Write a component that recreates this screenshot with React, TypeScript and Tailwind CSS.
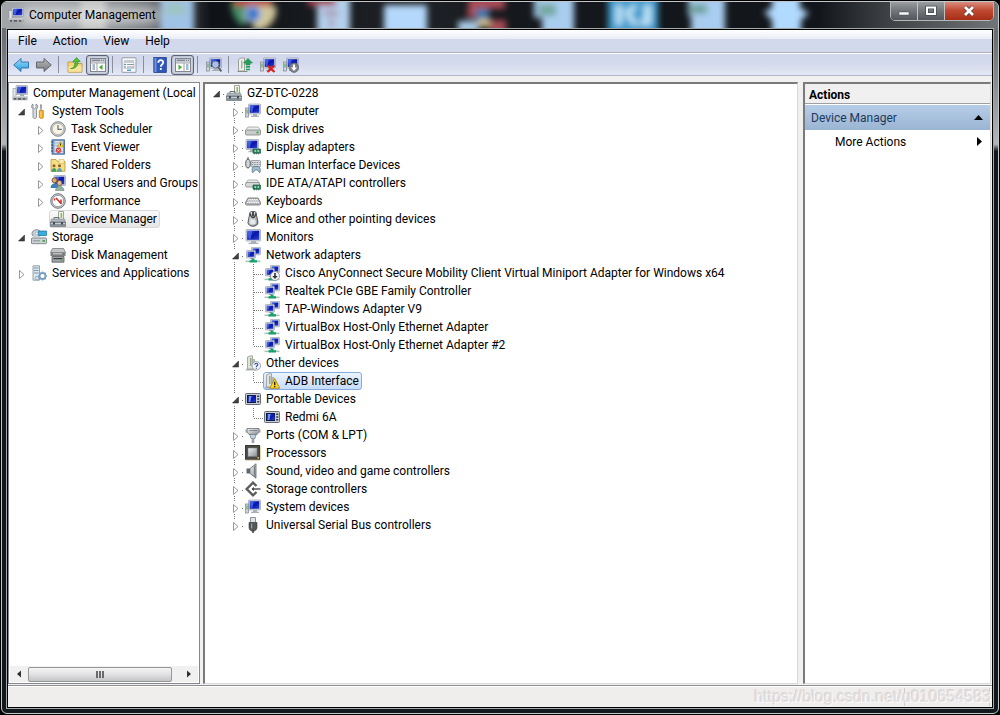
import type { ReactNode } from "react";
import clsx from "clsx";

type TreeNode = {
  label: string;
  icon: string;
  selected?: "active" | "inactive";
  children?: TreeNode[];
  closed?: boolean;
};

/* ---------- icon parts ---------- */

function Screen({ x, y, w, h }: { x: number; y: number; w: number; h: number }) {
  return (
    <g>
      <rect x={x} y={y} width={w} height={h} rx="0.6" fill="#d5dbe4" stroke="#8d96a5" strokeWidth="0.6" />
      <rect x={x + 1.2} y={y + 1.2} width={w - 2.4} height={h - 2.4} fill="url(#screen)" />
      <path d={`M${x + 1.4} ${y + 1.4}h${(w - 2.8) / 2.4}l-${w / 8} ${h - 2.8}h-${w / 8}z`} fill="#4d6cf0" opacity="0.75" />
    </g>
  );
}

const bigMonitor = (
  <g>
    <Screen x={1} y={0.5} w={14.5} h={11.5} />
    <path d="M6 12h5v1.8h2.5V15h-10v-1.2H6z" fill="#a9b0b9" />
  </g>
);

const computer = (
  <g>
    <Screen x={3.5} y={1} w={12} h={10} />
    <path d="M8 11h4v1.8h2V14H6v-1.2h2z" fill="#a9b0b9" />
    <rect x="0.5" y="5" width="3" height="9" fill="#cfd6da" stroke="#7e878d" strokeWidth="0.7" />
    <path d="M1.5 6.5h1v4h-1z" fill="#45a64a" />
  </g>
);

const mgmt = (
  <g>
    <Screen x={4} y={0.5} w={11.5} h={9} />
    <path d="M1 3.5h3v8H1z" fill="#e4e8ec" stroke="#858e98" strokeWidth="0.6" />
    <path d="M8 9.5h4v2H8z" fill="#a4abb4" />
    <path d="M0.5 11.5h15v3.8h-15z" fill="#a0a5aa" />
    <path d="M0.5 11.2h15v1.2h-15z" fill="#d3d7da" />
    <path d="M2 13.2h2v1.2H2zm4 0h3v1.2H6zm5 0h2v1.2h-2z" fill="#43474b" />
  </g>
);

const network = (
  <g>
    <Screen x={6.5} y={0.3} w={9} h={7.5} />
    <Screen x={1.5} y={3.5} w={9} h={7.5} />
    <path d="M5 11h3v1H5z" fill="#9aa1a9" />
    <path d="M0.5 13.6h15v1.5h-15z" fill="#a3c4b4" />
    <path d="M6.5 11.5h3v1.7h2.5v2.4H4.5v-2.4h2z" fill="#16a06c" />
  </g>
);

const toolbox = (
  <g>
    <path d="M8.5 0.5h5v8h-5z" fill="#f3f5ee" stroke="#8a8f88" strokeWidth="0.8" />
    <path d="M10.5 2h1.6v5h-1.6z" fill="#8cba5d" />
    <path d="M4 8V6.500h5V8" fill="none" stroke="#6b7378" />
    <path d="M1.5 8h13l1 3.5h-15z" fill="#aeb7bc" stroke="#737b80" strokeWidth="0.5" />
    <path d="M0.5 11h15v4.5h-15z" fill="#87929a" stroke="#5f686e" strokeWidth="0.6" />
    <path d="M1 12h14v1H1z" fill="#c5cdd2" />
    <path d="M3 11h2v2.5H3zm8 0h2v2.5h-2z" fill="#454c51" />
  </g>
);

const tower = (
  <g>
    <path d="M2.5 2 5 0.8h2.5V14H2.5z" fill="#dfe3dd" stroke="#8a8e88" strokeWidth="0.7" />
    <path d="M5 3h1.5v8H5z" fill="#96ab82" />
    <path d="M0.8 14.2h10V15.4h-10z" fill="#9a9f9a" />
    <path d="M8 4h2v10H8z" fill="#b3b8b3" />
  </g>
);

const drive = (
  <g>
    <path d="M3 6h10l2.5 3.5h-15z" fill="#eceeee" stroke="#909494" strokeWidth="0.7" />
    <rect x="0.5" y="9" width="15" height="5" rx="1" fill="#c9cccb" stroke="#7f8383" strokeWidth="0.8" />
    <path d="M11.5 10.5h2v2h-2z" fill="#3ba845" />
  </g>
);

const card = (
  <g>
    <path d="M8 10h7.5v4.2H8z" fill="#23855a" stroke="#155a3d" strokeWidth="0.7" />
    <path d="M9.5 11.2h1.6v1.6H9.5zm3 0h1.6v1.6h-1.6z" fill="#d3e7cd" />
    <path d="M9 14.8h1m1 0h1m1 0h1" stroke="#3b6653" />
  </g>
);

const portable = (
  <g>
    <rect x="0.5" y="2.5" width="15" height="11" rx="1" fill="#c9cdd4" stroke="#656b77" />
    <rect x="2" y="4" width="9" height="8" fill="#101a44" />
    <rect x="3.500" y="5" width="7" height="6" fill="url(#screen)" />
    <path d="M4 5h2.500L5.400 11H3.500z" fill="#6f93ff" />
    <path d="M12.200 4.500h2v1.500h-2zm0 2.800h2v1.500h-2zm0 2.800h2v1.500h-2z" fill="#30343d" />
  </g>
);

const downBadge = (
  <g>
    <circle cx="11" cy="11" r="4.5" fill="#f3f3f3" stroke="#84888c" strokeWidth="0.8" />
    <path d="M10.2 8h1.6v3h1.900L11 14l-2.700-3h1.900z" fill="#2f3337" />
  </g>
);

const icons: Record<string, ReactNode> = {
  mgmt,
  computer,
  network,
  toolbox,
  drive,
  portable,
  monitor: bigMonitor,
  tools: (
    <g>
      <path d="M2 1v3.500l1.500 1.300L5 4.500V1c2 .8 2.300 3.500.5 5v8c0 2-3.500 2-3.500 0V6C0 4.500.3 1.800 2 1z" fill="#d9dcdf" stroke="#777d83" strokeWidth="0.8" />
      <path d="M9 1.500h2L10.600 7H9.400z" fill="#8c9298" />
      <path d="M8.300 7.500h4v7c-1 1.300-3 1.300-4 0z" fill="#f0ae1d" stroke="#b97c0a" strokeWidth="0.7" />
      <path d="M9.500 8.500h.9v6h-.9z" fill="#ffe08a" />
    </g>
  ),
  clock: (
    <g>
      <circle cx="8" cy="8" r="7.300" fill="#c6cace" stroke="#7d8286" strokeWidth="0.9" />
      <circle cx="8" cy="8" r="5.600" fill="#fbf4dc" stroke="#92979b" strokeWidth="0.5" />
      <path d="M8 4v4.300h3.700" fill="none" stroke="#5b6f9a" strokeWidth="1.200" />
    </g>
  ),
  events: (
    <g>
      <rect x="2" y="0.800" width="12.500" height="14.400" fill="#7e9dc8" stroke="#3e5d93" strokeWidth="0.8" />
      <path d="M4.500 2h8.500v12H4.500z" fill="#d6e3f4" />
      <path d="M5 4h8M5 6.500h8M5 12.500h8" stroke="#8ca6cc" strokeWidth="0.7" />
      <path d="M1 3h2m-2 3h2M1 9h2m-2 3h2" stroke="#33445f" />
      <path d="m10.500 2.500 3.300 5.500H7.200z" fill="#fbd133" stroke="#a8810c" strokeWidth="0.5" />
      <path d="M10.500 4.500v2" stroke="#3d3000" />
      <circle cx="8.500" cy="11.300" r="2.700" fill="#da4038" />
      <path d="m7.400 10.200 2.200 2.200m0-2.200-2.200 2.200" stroke="#fff" strokeWidth="0.8" />
    </g>
  ),
  shared: (
    <g>
      <path d="M1 2.500h5l1.500 1.800H15v10H1z" fill="#f4dd84" stroke="#bb9634" strokeWidth="0.8" />
      <path d="M9 2.500h5v4H9z" fill="#faedb5" stroke="#c8a84f" strokeWidth="0.5" />
      <circle cx="4" cy="8.800" r="1.500" fill="#8a5b2c" />
      <path d="M1.500 14.800c0-5 5-5 5 0z" fill="#4a9d62" />
      <circle cx="9.500" cy="8.800" r="1.500" fill="#8a5b2c" />
      <path d="M7 14.800c0-5 5-5 5 0z" fill="#5aa5ad" />
    </g>
  ),
  users: (
    <g>
      <Screen x={4} y={0.5} w={11.5} h={10} />
      <circle cx="4.500" cy="5.300" r="2.500" fill="#dca872" stroke="#6d4520" strokeWidth="0.8" />
      <path d="M0.500 13c0-6 8-6 8 0z" fill="#3c7fba" />
      <circle cx="9.500" cy="8" r="2.500" fill="#e8c08c" stroke="#704a24" strokeWidth="0.8" />
      <path d="M5.500 15.800c0-6 8.500-6 8.500 0z" fill="#91b0a0" stroke="#56796a" strokeWidth="0.5" />
    </g>
  ),
  perf: (
    <g>
      <circle cx="8" cy="8" r="7.300" fill="#cfd2d5" stroke="#666b6f" strokeWidth="0.9" />
      <circle cx="8" cy="8" r="5.700" fill="#fff" stroke="#777c80" strokeWidth="0.7" />
      <path d="M4.500 5.500v2M6 5l5 5.500M11 6.500V11" fill="none" stroke="#d8281f" strokeWidth="1.500" />
    </g>
  ),
  storage: (
    <g>
      <ellipse cx="5.500" cy="4.500" rx="4.500" ry="3.800" fill="#c9d1d8" stroke="#707980" strokeWidth="0.8" />
      <circle cx="5.500" cy="4.500" r="1.300" fill="#fff" stroke="#7f888f" strokeWidth="0.5" />
      <path d="M7.500 2h8v4.500h-8z" fill="#36aee4" stroke="#1a6e9c" strokeWidth="0.7" />
      <path d="M1 7.500h13.500l1 2H0.500z" fill="#eceeee" />
      <rect x="0.500" y="9" width="15" height="5.700" rx="0.700" fill="#cdd2d4" stroke="#70777b" strokeWidth="0.8" />
      <path d="M11.500 11h2.500v1.800h-2.500z" fill="#3cad46" />
      <path d="M2 11.800h7" stroke="#8b9296" />
    </g>
  ),
  disk: (
    <g>
      <path d="M2.500 1.500h11l2 4H0.500z" fill="#c4c6c7" stroke="#6f7375" strokeWidth="0.7" />
      <path d="M0.500 5.500h15v3.500h-15z" fill="#7c8082" />
      <path d="M3 6.800h9" stroke="#d9dcdd" />
      <path d="M2 9.500h12v5.700H2z" fill="#a0a4a6" stroke="#575b5d" strokeWidth="0.8" />
      <path d="M3.500 11h9v1.200h-9z" fill="#383b3d" />
      <path d="M10.500 13h2v1h-2z" fill="#4fb84f" />
    </g>
  ),
  services: (
    <g>
      <path d="M2 0.800h6.500v14.400H2z" fill="#dfe7ee" stroke="#808d98" strokeWidth="0.8" />
      <path d="M3 3h4.500M3 5.500h4.500M3 8h4.500" stroke="#7d97ad" />
      <circle cx="11.500" cy="11" r="3" fill="none" stroke="#7aa0c2" strokeWidth="1.800" />
      <path d="M11.500 6.500v2m0 5v2m-4.500-4.500h2m5 0h2m-7.700-3.200 1.400 1.400m3.600 3.600 1.400 1.400m0-6.400-1.400 1.400m-3.600 3.600-1.400 1.400" stroke="#7aa0c2" strokeWidth="1.300" />
      <circle cx="6" cy="13.200" r="1.800" fill="none" stroke="#93a9bb" />
    </g>
  ),
  display: (
    <g>
      <Screen x={1} y={0.5} w={12.5} h={10} />
      <path d="M5 10.500h3.500V12H10v1.200H3.500V12H5z" fill="#a9b0b9" />
      {card}
    </g>
  ),
  hid: (
    <g>
      <rect x="6" y="3.500" width="9.500" height="6.500" rx="1" fill="#d9dcdf" stroke="#7e8489" strokeWidth="0.7" />
      <path d="M7 5.500h7.500M7 7.500h7.500" stroke="#82888d" strokeDasharray="1 0.700" />
      <path d="M3 0v2m0 0c3 0 3.200 9 0 9s-3-9 0-9z" fill="#d3d6d9" stroke="#44494d" strokeWidth="0.9" />
      <path d="M7.500 15.500c-1-3 0-6 1.500-6h4c1.500 0 3 3 2 6-1 .5-1.800-2-2.500-2.500h-2.500c-.7.500-1.500 3-2.500 2.500z" fill="#9dbfd4" stroke="#4c6473" strokeWidth="0.7" />
    </g>
  ),
  ide: (
    <g>
      <path d="M3 5h9l2.500 3H1z" fill="#eceeee" stroke="#909494" strokeWidth="0.7" />
      <rect x="0.500" y="7.500" width="14" height="4.500" rx="1.500" fill="#d7dad9" stroke="#868a8a" strokeWidth="0.8" />
      {card}
    </g>
  ),
  keyboard: (
    <g>
      <path d="M3 5h10l2.500 4.500v1.800l-1 .7h-13l-1-.7V9.500z" fill="#b1b5b8" stroke="#6b7074" strokeWidth="0.8" />
      <path d="M3.500 6.500h9.500M2.700 8h11M2 9.500h12.300" stroke="#fff" strokeDasharray="1.200 0.600" />
    </g>
  ),
  mouse: (
    <g>
      <path d="M5 1.500c0-1.500 6-1.500 6 0l2 10c0 5-10 5-10 0z" fill="url(#metal)" stroke="#44484b" strokeWidth="0.9" />
      <path d="M5 2.500c1 3.500 1.500 4 3 4s2-.5 3-4" fill="none" stroke="#3e4245" strokeWidth="1.300" />
      <path d="M7.200 1h1.600v4H7.200z" fill="#26292b" />
      <path d="M6 8c1 1 3 1 4 0l1 4c-1 2-5 2-6 0z" fill="#fff" opacity="0.700" />
    </g>
  ),
  netdisabled: (
    <g>
      {network}
      {downBadge}
    </g>
  ),
  other: (
    <g>
      {tower}
      <circle cx="11.300" cy="10.800" r="4.300" fill="#f1f4fa" stroke="#8a95ab" strokeWidth="0.8" />
      <path d="M9.800 9.800c0-2.200 3.200-2 3 0-.1 1-1.500 1-1.500 2.200m0 .8v1" fill="none" stroke="#324e9b" strokeWidth="1.100" />
    </g>
  ),
  adb: (
    <g>
      {tower}
      <path d="m10.700 5.500 5 9.800h-10z" fill="#fdd52b" stroke="#a57c0d" strokeWidth="0.8" strokeLinejoin="round" />
      <path d="M10.700 8.800v3.400m0 .9v1.200" stroke="#2d2400" strokeWidth="1.400" />
    </g>
  ),
  ports: (
    <g>
      <path d="M2 1.500h12v3.500l-2 2.500H4L2 5z" fill="url(#metal)" stroke="#6a7076" strokeWidth="0.8" />
      <path d="M0.500 2.500h2v3h-2zm13 0h2v3h-2z" fill="#9ba1a6" />
      <path d="M5 7.500h6l-1 4H6z" fill="#c3d2dd" stroke="#707980" strokeWidth="0.7" />
      <path d="M6.700 11.500h2.600V16H6.700z" fill="#9aa1a7" />
      <path d="M4.500 3.500h7" stroke="#40464a" strokeDasharray="1 1" />
    </g>
  ),
  cpu: (
    <g>
      <path d="M1.500 15.300h14M15.300 1.500v13" stroke="#c29d4a" strokeWidth="1" strokeDasharray="1 1" />
      <rect x="0.500" y="0.500" width="14" height="13.700" fill="#4a4a47" stroke="#3a3a37" />
      <rect x="3" y="3" width="9" height="8.500" fill="url(#metal)" stroke="#787878" strokeWidth="0.5" />
      <path d="M12.500 12h1.500v1.500h-1.500z" fill="#efc853" />
    </g>
  ),
  speaker: (
    <g>
      <path d="M1.500 5.500h3.500v5H1.500z" fill="#5d686f" />
      <path d="M5 5.500 11 0.800v14.400L5 10.500z" fill="url(#metal)" stroke="#5f686e" strokeWidth="0.8" />
      <path d="M9.500 2.500v11" stroke="#798187" />
    </g>
  ),
  storagectl: (
    <g>
      <path d="M11.500 5 8 1.700 1.700 8 8 14.300l3.500-3.300" fill="none" stroke="#5c5c5c" strokeWidth="2.400" />
      <path d="M15.500 8H7" stroke="#7f7f7f" strokeWidth="2" />
      <path d="M6.500 8l2.500-2.300v4.600z" fill="#4a4a4a" />
    </g>
  ),
  usb: (
    <g>
      <path d="M5.500 0.500h5V6h-5z" fill="#dfe2e4" stroke="#767b7f" strokeWidth="0.8" />
      <path d="M4 5.500h8v5c0 2.500-2 3-2.500 3.500h-3C6 13.500 4 13 4 10.500z" fill="#54585b" stroke="#36393b" strokeWidth="0.6" />
      <path d="M6 6.500h1.200v5H6z" fill="#989da1" />
      <path d="M7.200 14h1.600v2H7.200z" fill="#45494c" />
    </g>
  ),
  /* toolbar */
  back: <path d="M0.700 8 8 1.500V5h7.500v6H8v3.500z" fill="url(#back)" stroke="#2a6fa8" strokeWidth="0.9" />,
  forward: <path d="M15.300 8 8 1.500V5H0.500v6H8v3.500z" fill="url(#fwd)" stroke="#5c5f62" strokeWidth="0.9" />,
  folderup: (
    <g>
      <path d="M1 5h5l1.500 1.500H15v8.700H1z" fill="#f3d477" stroke="#b98f2f" strokeWidth="0.8" />
      <path d="M1.500 9h13v5.700h-13z" fill="#f9e39b" />
      <path d="M3.500 11.500C7.500 11 8 8 8 4.500H5.800L9.600 0.500l3.700 4H11c0 4-2 7.500-7.500 7z" fill="#52c337" stroke="#2b8a1b" strokeWidth="0.6" />
    </g>
  ),
  showtree: (
    <g>
      <rect x="0.500" y="1.500" width="15" height="13" fill="#fff" stroke="#80858f" />
      <path d="M1 2h14v3.500H1z" fill="#c5cad3" />
      <path d="M2 3.300h8M11 3.300h1m1 0h1" stroke="#6f7582" />
      <path d="M1 6h14" stroke="#80858f" strokeWidth="0.7" />
      <path d="M2.500 8h2.500m-2.500 2h2.500m-2.500 2h2.500" stroke="#4a73ad" />
      <path d="M7 6v8.500" stroke="#9a9ea6" />
      <path d="M12.500 7.500v5.500L9 10.200z" fill="#3fae2a" />
    </g>
  ),
  showpane: (
    <g>
      <rect x="0.500" y="1.500" width="15" height="13" fill="#fff" stroke="#80858f" />
      <path d="M1 2h14v3.500H1z" fill="#c5cad3" />
      <path d="M2 3.300h8M11 3.300h1m1 0h1" stroke="#6f7582" />
      <path d="M1 6h14" stroke="#80858f" strokeWidth="0.7" />
      <path d="M11 8h2.500M11 10h2.500M11 12h2.500" stroke="#4a73ad" />
      <path d="M9 6v8.500" stroke="#9a9ea6" />
      <path d="M3.500 7.500v5.500L7 10.200z" fill="#3fae2a" />
    </g>
  ),
  properties: (
    <g>
      <rect x="1" y="0.800" width="14" height="14.500" rx="0.500" fill="#fafbfc" stroke="#8c929b" strokeWidth="0.9" />
      <path d="M3 3h10v2H3z" fill="#c5cbd4" />
      <path d="M3 7.500h2m-2 2.500h2" stroke="#4a90c8" />
      <path d="M6 7.500h7M6 10h7" stroke="#8c96a3" />
      <path d="M6 12.500h4v1.500H6z" fill="#4aa7d8" />
      <path d="M3 5.500h10v6H3z" fill="none" stroke="#a6adb8" strokeWidth="0.6" />
    </g>
  ),
  help: (
    <g>
      <rect x="1.800" y="0.500" width="12.500" height="15" fill="#2d57b8" stroke="#1b3680" strokeWidth="0.7" />
      <path d="M2.500 1h2v14h-2z" fill="#6f93de" />
      <path d="M6.300 5.800c0-3.500 5-3.300 4.900-.3-.1 2-2.400 2-2.400 4.200m0 1.300v2" fill="none" stroke="#fff" strokeWidth="1.800" />
    </g>
  ),
  scan: (
    <g>
      {computer}
      <circle cx="9.500" cy="7.500" r="3.500" fill="#cfe5f7" fillOpacity="0.800" stroke="#65727f" />
      <path d="m12 10 3.500 4.500" stroke="#56616c" strokeWidth="2" />
    </g>
  ),
  update: (
    <g>
      <path d="M1.500 2.500 4 1h3.500v13H1.500z" fill="#eef0ec" stroke="#8a8e88" strokeWidth="0.8" />
      <path d="M4 3.500h1.500v8H4z" fill="#a3b296" />
      <path d="M0.500 14.500h10" stroke="#8a8e88" strokeWidth="1.200" />
      <path d="M11 1.500 15.500 6H13v2H9V6H6.500z" fill="#1fa455" stroke="#0d7538" strokeWidth="0.5" />
      <path d="M9 9h4v1.700H9zm0 2.700h4v1.500H9z" fill="#1fa455" />
    </g>
  ),
  uninstall: (
    <g>
      {computer}
      <path d="m7.500 8.500 7 6.500m0-6.500-7 6.500" stroke="#dd1d1a" strokeWidth="2.200" />
    </g>
  ),
  disable: (
    <g>
      {computer}
      <circle cx="11" cy="10.700" r="4.700" fill="#7e8286" stroke="#5d6165" strokeWidth="0.700" />
      <path d="M10 7.500h2v3h2L11 14l-3-3.500h2z" fill="#fff" />
    </g>
  ),
};

function Icon({ name }: { name: string }) {
  return (
    <svg viewBox="0 0 16 16" className="size-4 shrink-0" aria-hidden="true">
      {icons[name]}
    </svg>
  );
}

function IconDefs() {
  return (
    <svg className="absolute size-0" aria-hidden="true">
      <defs>
        <linearGradient id="screen" x1="0" y1="0" x2="1" y2="1">
          <stop offset="0" stopColor="#2f4fe0" />
          <stop offset="0.5" stopColor="#0a16a8" />
          <stop offset="1" stopColor="#2a44d0" />
        </linearGradient>
        <linearGradient id="metal" x1="0" y1="0" x2="1" y2="1">
          <stop offset="0" stopColor="#f4f5f6" />
          <stop offset="1" stopColor="#868c91" />
        </linearGradient>
        <linearGradient id="back" x1="0" y1="0" x2="0" y2="1">
          <stop offset="0" stopColor="#a5dcf8" />
          <stop offset="1" stopColor="#1f9be0" />
        </linearGradient>
        <linearGradient id="fwd" x1="0" y1="0" x2="0" y2="1">
          <stop offset="0" stopColor="#b9bbbd" />
          <stop offset="1" stopColor="#77797b" />
        </linearGradient>
      </defs>
    </svg>
  );
}

/* ---------- tree ---------- */

const consoleTree: TreeNode = {
  label: "Computer Management (Local",
  icon: "mgmt",
  children: [
    {
      label: "System Tools",
      icon: "tools",
      children: [
        { label: "Task Scheduler", icon: "clock", closed: true },
        { label: "Event Viewer", icon: "events", closed: true },
        { label: "Shared Folders", icon: "shared", closed: true },
        { label: "Local Users and Groups", icon: "users", closed: true },
        { label: "Performance", icon: "perf", closed: true },
        { label: "Device Manager", icon: "toolbox", selected: "inactive" },
      ],
    },
    { label: "Storage", icon: "storage", children: [{ label: "Disk Management", icon: "disk" }] },
    { label: "Services and Applications", icon: "services", closed: true },
  ],
};

const deviceTree: TreeNode = {
  label: "GZ-DTC-0228",
  icon: "toolbox",
  children: [
    { label: "Computer", icon: "computer", closed: true },
    { label: "Disk drives", icon: "drive", closed: true },
    { label: "Display adapters", icon: "display", closed: true },
    { label: "Human Interface Devices", icon: "hid", closed: true },
    { label: "IDE ATA/ATAPI controllers", icon: "ide", closed: true },
    { label: "Keyboards", icon: "keyboard", closed: true },
    { label: "Mice and other pointing devices", icon: "mouse", closed: true },
    { label: "Monitors", icon: "monitor", closed: true },
    {
      label: "Network adapters",
      icon: "network",
      children: [
        { label: "Cisco AnyConnect Secure Mobility Client Virtual Miniport Adapter for Windows x64", icon: "netdisabled" },
        { label: "Realtek PCIe GBE Family Controller", icon: "network" },
        { label: "TAP-Windows Adapter V9", icon: "network" },
        { label: "VirtualBox Host-Only Ethernet Adapter", icon: "network" },
        { label: "VirtualBox Host-Only Ethernet Adapter #2", icon: "network" },
      ],
    },
    {
      label: "Other devices",
      icon: "other",
      children: [{ label: "ADB Interface", icon: "adb", selected: "active" }],
    },
    { label: "Portable Devices", icon: "portable", children: [{ label: "Redmi 6A", icon: "portable" }] },
    { label: "Ports (COM & LPT)", icon: "ports", closed: true },
    { label: "Processors", icon: "cpu", closed: true },
    { label: "Sound, video and game controllers", icon: "speaker", closed: true },
    { label: "Storage controllers", icon: "storagectl", closed: true },
    { label: "System devices", icon: "computer", closed: true },
    { label: "Universal Serial Bus controllers", icon: "usb", closed: true },
  ],
};

// One 19px indent step: dotted guide lines plus the expander arrow, if any.
function Cell({ lines, glyph, last, through, root }: { lines?: boolean; glyph?: "open" | "closed"; last?: boolean; through?: boolean; root?: boolean }) {
  return (
    <svg viewBox="0 0 19 18" className="h-[18px] w-[19px] shrink-0" aria-hidden="true">
      {lines && (
        <g stroke="#7b7b7b" strokeDasharray="1 1" fill="none">
          {through && <path d="M9.500 0v18" />}
          {!through && !root && <path d={glyph ? "M9.500 0v3" : "M9.500 0v10"} />}
          {!through && !root && !last && <path d={glyph ? "M9.500 16v2" : "M9.500 10v8"} />}
          {!through && <path d={glyph ? "M17 10.500h2" : "M10 10.500h9"} />}
        </g>
      )}
      {glyph === "open" && <path d="M13.500 7v6H7.500z" fill="#404040" stroke="#1f1f1f" strokeWidth="0.500" />}
      {glyph === "closed" && <path d="M8.500 6.500v8l4.500-4z" fill="#fff" stroke="#999" />}
    </svg>
  );
}

function Branch({ node, depth, trail, last, lines }: { node: TreeNode; depth: number; trail: boolean[]; last: boolean; lines: boolean }) {
  const glyph = node.closed ? "closed" : node.children ? "open" : undefined;
  return (
    <li role="treeitem" aria-expanded={glyph ? glyph === "open" : undefined} aria-selected={!!node.selected}>
      <div className="flex h-[18px] items-center whitespace-nowrap">
        {trail.map((more, i) => (
          <Cell key={i} lines={lines && more} through />
        ))}
        {(depth > 0 || lines) && <Cell lines={lines} glyph={glyph} last={last} root={depth === 0} />}
        <span
          className={clsx(
            "flex h-[18px] items-center gap-[5px] rounded-[3px] border pr-[2px]",
            !node.selected && "border-transparent",
            node.selected === "active" && "border-[#84acdd] bg-linear-to-b from-[#ecf4fd] to-[#c6dcf8]",
            node.selected === "inactive" && "border-[#d9d9d9] bg-linear-to-b from-[#fafafa] to-[#e6e6e6]",
          )}
        >
          <Icon name={node.icon} />
          <span>{node.label}</span>
        </span>
      </div>
      {node.children && (
        <ul role="group">
          {node.children.map((child, i) => (
            <Branch
              key={child.label}
              node={child}
              depth={depth + 1}
              trail={depth > 0 ? [...trail, !last] : lines ? [false] : []}
              last={i === node.children!.length - 1}
              lines={lines}
            />
          ))}
        </ul>
      )}
    </li>
  );
}

function Tree({ node, label, lines = false }: { node: TreeNode; label: string; lines?: boolean }) {
  return (
    <ul role="tree" aria-label={label} className={lines ? "pl-px" : "pl-[2px]"}>
      <Branch node={node} depth={0} trail={[]} last lines={lines} />
    </ul>
  );
}

/* ---------- window chrome ---------- */

// Desktop icons showing blurred through the glass title bar.
function Glass() {
  return (
    <svg viewBox="0 0 996 26" preserveAspectRatio="none" className="absolute inset-x-0 top-0 h-[26px] w-full" aria-hidden="true">
      <defs>
        <filter id="soft" x="-5%" y="-50%" width="110%" height="200%">
          <feGaussianBlur stdDeviation="3" />
        </filter>
        <filter id="halo" x="-20%" y="-100%" width="140%" height="300%">
          <feGaussianBlur stdDeviation="6" />
        </filter>
        <linearGradient id="sheen" x1="0" x2="1">
          <stop offset="0" stopColor="#a2a5a8" />
          <stop offset="0.060" stopColor="#9da0a4" />
          <stop offset="0.120" stopColor="#84888c" />
          <stop offset="0.160" stopColor="#5d6165" />
          <stop offset="0.210" stopColor="#0f1318" />
          <stop offset="0.420" stopColor="#1f2226" />
          <stop offset="0.500" stopColor="#15181c" />
          <stop offset="0.820" stopColor="#12161b" />
          <stop offset="0.890" stopColor="#3f4245" />
          <stop offset="1" stopColor="#717578" />
        </linearGradient>
      </defs>
      <rect width="996" height="26" fill="url(#sheen)" />
      <g filter="url(#soft)">
        <path d="M158 -6h34v40h-34z" fill="#9fc3e6" />
        <path d="M163 2h20v10h-20z" fill="#9ec4be" />
        <path d="M78 -6h26v40H78z" fill="#c0c2bd" />
        <path d="M229 0h26v12l-14 12c-8-4-12-14-12-24z" fill="#448d63" />
        <path d="M232 -6h38v10h-38z" fill="#b8473f" />
        <path d="M256 4h18c2 10-4 20-14 24h-10z" fill="#cfc69a" />
        <circle cx="251" cy="12" r="8" fill="#2f74cc" stroke="#c5cfda" strokeWidth="2" />
        <path d="M315 -6h33v40h-33z" fill="#b4d0ee" />
        <path d="M306 -6h28v10h-28zm16 16h14v3h-14zm5 9h5v4h-5z" fill="#a4434e" />
        <path d="M382 3h43v30h-43z" fill="#b4d8fb" />
        <path d="M467 -6h36v13h-20l-10 9h-8z" fill="#a84b54" />
        <path d="M488 18h16v14h-16z" fill="#a84b54" />
        <path d="M474 7h13v11h-13z" fill="#2f78b0" />
        <path d="M456 19h20v12h-20z" fill="#a9cbe8" />
        <path d="M476 17h12v8h-12z" fill="#d0bd86" />
        <path d="M532 -6h40v40h-32V16h-8z" fill="#a9cdf0" />
        <path d="M536 2h18v12h-18z" fill="#74a8a2" />
        <path d="M606 -6h50v40h-50z" fill="#3e9bcd" />
        <path d="M614 3h6v20h-6zm8 8 8-8h6l-7 9 8 11h-7zm20-8h7v20h-11v-5h4z" fill="#c2e6f8" />
        <path d="M686 -6h37v40h-34V14h-3z" fill="#a9cdf0" />
        <path d="M687 2h18v10h-18z" fill="#6fa39c" />
        <path d="M770 -6h28v12l9 5-8 7v14h-29V18l-8-8 8-4z" fill="#b1daff" />
      </g>
      <rect x="18" y="5" width="140" height="17" rx="8" fill="#eceef0" opacity="0.650" filter="url(#halo)" />
    </svg>
  );
}

function WindowButtons() {
  return (
    <div className="absolute -top-px right-0 flex h-5 overflow-hidden rounded-b-[5px] border border-[#b4b7b9] bg-[#202326]">
      <button aria-label="Minimize" className="flex w-[27px] items-center justify-center border-r border-[#c0c2c4] bg-linear-to-b from-[#9b9ea0] via-[#75787c] via-45% to-[#53575d]">
        <svg viewBox="0 0 12 12" className="size-3">
          <rect x="1" y="7" width="10" height="3" fill="#fff" stroke="#4d5155" strokeWidth="0.6" />
        </svg>
      </button>
      <button aria-label="Maximize" className="flex w-[27px] items-center justify-center border-r border-[#c0c2c4] bg-linear-to-b from-[#9b9ea0] via-[#75787c] via-45% to-[#53575d]">
        <svg viewBox="0 0 12 12" className="size-3">
          <rect x="2" y="2.500" width="8" height="6.500" fill="none" stroke="#45494d" strokeWidth="3.400" />
          <rect x="2" y="2.500" width="8" height="6.500" fill="none" stroke="#fff" strokeWidth="2" />
        </svg>
      </button>
      <button aria-label="Close" className="flex w-12 items-center justify-center bg-linear-to-b from-[#d98d7e] via-[#c04a33] via-45% to-[#a82c14]">
        <svg viewBox="0 0 12 12" className="size-3">
          <path d="m2 2 8 8m0-8-8 8" stroke="#5b3a36" strokeWidth="4.200" />
          <path d="m2 2 8 8m0-8-8 8" stroke="#fff" strokeWidth="2.800" />
        </svg>
      </button>
    </div>
  );
}

function ToolButton({ icon, label, pressed }: { icon: string; label: string; pressed?: boolean }) {
  return (
    <button
      aria-label={label}
      className={clsx(
        "flex h-5 w-[23px] items-center justify-center",
        pressed && "rounded-[3px] border border-[#5d6371] bg-[#d0d6e4] shadow-[inset_0_0_2px_#9097a5]",
      )}
    >
      <Icon name={icon} />
    </button>
  );
}

function Separator() {
  return <span className="mr-1 ml-[3px] h-[17px] w-px bg-[#8b8f9c]" />;
}

function ScrollBar() {
  return (
    <div className="mx-px mb-px flex h-4 items-center bg-[#f0f0f0]">
      <button aria-label="Scroll left" className="flex h-4 w-[18px] items-center justify-center">
        <svg viewBox="0 0 8 8" className="size-2">
          <path d="M6 0.500v7L2 4z" fill="#303030" />
        </svg>
      </button>
      <div className="flex-1">
        <div className="flex h-[15px] w-[144px] items-center justify-center gap-px rounded-[2px] border border-[#979797] bg-linear-to-b from-[#f4f4f4] via-[#e4e4e5] via-45% to-[#c4c5c8]">
          <span className="h-[7px] w-[2px] bg-[#6a6a6a]" />
          <span className="h-[7px] w-[2px] bg-[#6a6a6a]" />
          <span className="h-[7px] w-[2px] bg-[#6a6a6a]" />
        </div>
      </div>
      <button aria-label="Scroll right" className="flex h-4 w-[18px] items-center justify-center">
        <svg viewBox="0 0 8 8" className="size-2">
          <path d="M2 0.500v7L6 4z" fill="#303030" />
        </svg>
      </button>
    </div>
  );
}

export default function App() {
  return (
    <div className="flex h-screen flex-col bg-black p-px font-[Roboto,'Open_Sans',sans-serif] text-[12px] leading-[16px] text-black select-none">
      <IconDefs />
      <div className="relative flex min-h-0 flex-1 flex-col overflow-hidden rounded-[6px] border border-[#c3c7ca] bg-linear-to-b from-[#6b6f73] from-5% via-[#b4b7ba] via-20% to-[#12191e] to-21% px-1 pb-1">
        <Glass />
        <header className="relative flex h-[26px] shrink-0 items-center gap-[5px] px-[2px]">
          <Icon name="mgmt" />
          <h1>Computer Management</h1>
          <WindowButtons />
        </header>

        <div className="relative flex min-h-0 flex-1 flex-col border border-[#a3a8ab]">
          <div className="flex min-h-0 flex-1 flex-col border border-black bg-[#f0f0f0]">
            <nav className="flex h-[23px] shrink-0 items-center border-b border-[#b0b2ba] bg-linear-to-b from-white via-[#e9edf6] via-40% to-[#d3d9ec] to-42% px-[2px]">
              {["File", "Action", "View", "Help"].map((item) => (
                <button key={item} className="px-2">
                  {item}
                </button>
              ))}
            </nav>

            <div role="toolbar" className="flex h-[23px] shrink-0 items-center border-t border-b border-t-white border-b-[#b3b5c9] bg-linear-to-b from-[#d3d9ec] from-40% to-[#e3e8f6] px-px">
              <ToolButton icon="back" label="Back" />
              <ToolButton icon="forward" label="Forward" />
              <Separator />
              <ToolButton icon="folderup" label="Up one level" />
              <ToolButton icon="showtree" label="Show/Hide Console Tree" pressed />
              <Separator />
              <ToolButton icon="properties" label="Properties" />
              <Separator />
              <ToolButton icon="help" label="Help" />
              <ToolButton icon="showpane" label="Show/Hide Action Pane" pressed />
              <Separator />
              <ToolButton icon="scan" label="Scan for hardware changes" />
              <Separator />
              <ToolButton icon="update" label="Update Driver Software" />
              <ToolButton icon="uninstall" label="Uninstall" />
              <ToolButton icon="disable" label="Disable" />
            </div>

            <main className="flex min-h-0 flex-1 gap-[3px] pt-[6px] pr-px">
              <aside className="flex w-[192px] shrink-0 flex-col overflow-hidden border border-[#828790] bg-white">
                <div className="min-h-0 flex-1 overflow-hidden pt-px">
                  <Tree node={consoleTree} label="Console tree" />
                </div>
                <ScrollBar />
              </aside>

              <section className="min-w-0 flex-1 overflow-hidden border-t-2 border-r border-b border-l-2 border-t-[#7a7a7a] border-r-[#d9d9d9] border-b-[#d9d9d9] border-l-[#7a7a7a] bg-white">
                <Tree node={deviceTree} label="Devices" lines />
              </section>

              <section className="ml-[2px] w-[188px] shrink-0 border-t-2 border-r border-b border-l-2 border-t-[#7a7a7a] border-r-[#d9d9d9] border-b-[#d9d9d9] border-l-[#7a7a7a] bg-white">
                <h2 className="mb-px h-5 border-b border-[#a0a0a0] bg-[#f0f0f0] px-1 pt-[3px] font-bold">Actions</h2>
                <button className="flex h-[25px] w-full items-center justify-between bg-linear-to-b from-[#b6cde7] to-[#9ab4d3] pr-[7px] pl-[6px] text-[#1e395b]">
                  Device Manager
                  <svg viewBox="0 0 9 5" className="h-[5px] w-[9px]">
                    <path d="M0 5h9L4.500 0z" fill="#000" />
                  </svg>
                </button>
                <button className="flex h-[23px] w-full items-center justify-between pr-2 pl-[30px]">
                  More Actions
                  <svg viewBox="0 0 5 9" className="h-[9px] w-[5px]">
                    <path d="M0 0v9l5-4.500z" fill="#000" />
                  </svg>
                </button>
              </section>
            </main>

            <footer className="relative mt-px flex h-[22px] shrink-0 items-center justify-end border-t border-[#8f8f8f] bg-[#f0eded] pr-px shadow-[inset_0_1px_0_#fff]">
              <span className="absolute right-[87px] h-[18px] w-px bg-[#d0cdcd]" />
              <span className="absolute right-[2px] h-[18px] w-px bg-[#d0cdcd]" />
              <span className="relative font-['Liberation_Sans',Arial,sans-serif] text-[16px] text-[#e3dfdf] [text-shadow:1px_1px_0_#fbfafa,-1px_-1px_0_#d9d5d5]">
                https://blog.csdn.net/u010654583
              </span>
            </footer>
          </div>
        </div>
      </div>
    </div>
  );
}
